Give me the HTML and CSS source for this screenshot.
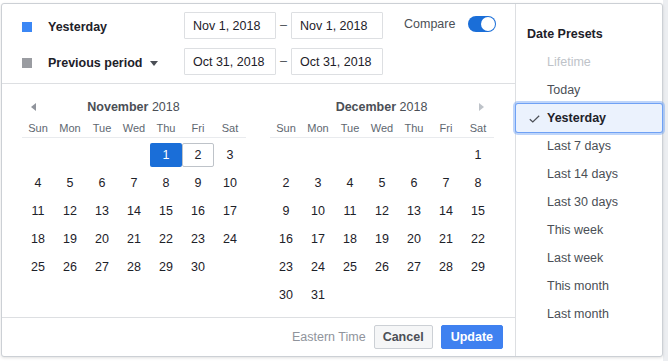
FILE: index.html
```html
<!DOCTYPE html>
<html lang="en">

<head>
    <meta charset="UTF-8">
    <meta name="viewport" content="width=device-width, initial-scale=1.0">
    <title>Date range picker</title>
    <link rel="stylesheet" href="styles.css">
</head>

<body>
    <div class="picker">
        <div class="main">
            <div class="ranges">
                <div class="range-row">
                    <div class="legend">
                        <span class="swatch swatch-current"></span>
                        <span class="legend-label">Yesterday</span>
                    </div>
                    <input class="date-input" type="text" value="Nov 1, 2018">
                    <span class="dash">&ndash;</span>
                    <input class="date-input" type="text" value="Nov 1, 2018">
                    <div class="compare">
                        <span>Compare</span>
                        <span class="toggle on"><span class="knob"></span></span>
                    </div>
                </div>
                <div class="range-row">
                    <div class="legend">
                        <span class="swatch swatch-previous"></span>
                        <span class="legend-label">Previous period</span>
                        <span class="caret"></span>
                    </div>
                    <input class="date-input" type="text" value="Oct 31, 2018">
                    <span class="dash">&ndash;</span>
                    <input class="date-input" type="text" value="Oct 31, 2018">
                </div>
            </div>

            <div class="calendars">
                <div class="calendar">
                    <div class="cal-head">
                        <span class="nav nav-prev"></span>
                        <span class="cal-title"><b>November</b> 2018</span>
                        <span></span>
                    </div>
                    <div class="weekdays">
                        <span>Sun</span><span>Mon</span><span>Tue</span><span>Wed</span><span>Thu</span><span>Fri</span><span>Sat</span>
                    </div>
                    <div class="days">
                        <span class="day selected" style="grid-column-start: 5">1</span>
                        <span class="day hover">2</span>
                        <span class="day">3</span>
                        <span class="day">4</span><span class="day">5</span><span class="day">6</span><span class="day">7</span><span class="day">8</span><span class="day">9</span><span class="day">10</span>
                        <span class="day">11</span><span class="day">12</span><span class="day">13</span><span class="day">14</span><span class="day">15</span><span class="day">16</span><span class="day">17</span>
                        <span class="day">18</span><span class="day">19</span><span class="day">20</span><span class="day">21</span><span class="day">22</span><span class="day">23</span><span class="day">24</span>
                        <span class="day">25</span><span class="day">26</span><span class="day">27</span><span class="day">28</span><span class="day">29</span><span class="day">30</span>
                    </div>
                </div>

                <div class="calendar">
                    <div class="cal-head">
                        <span></span>
                        <span class="cal-title"><b>December</b> 2018</span>
                        <span class="nav nav-next"></span>
                    </div>
                    <div class="weekdays">
                        <span>Sun</span><span>Mon</span><span>Tue</span><span>Wed</span><span>Thu</span><span>Fri</span><span>Sat</span>
                    </div>
                    <div class="days">
                        <span class="day" style="grid-column-start: 7">1</span>
                        <span class="day">2</span><span class="day">3</span><span class="day">4</span><span class="day">5</span><span class="day">6</span><span class="day">7</span><span class="day">8</span>
                        <span class="day">9</span><span class="day">10</span><span class="day">11</span><span class="day">12</span><span class="day">13</span><span class="day">14</span><span class="day">15</span>
                        <span class="day">16</span><span class="day">17</span><span class="day">18</span><span class="day">19</span><span class="day">20</span><span class="day">21</span><span class="day">22</span>
                        <span class="day">23</span><span class="day">24</span><span class="day">25</span><span class="day">26</span><span class="day">27</span><span class="day">28</span><span class="day">29</span>
                        <span class="day">30</span><span class="day">31</span>
                    </div>
                </div>
            </div>

            <div class="footer">
                <span class="timezone">Eastern Time</span>
                <button class="btn btn-cancel">Cancel</button>
                <button class="btn btn-update">Update</button>
            </div>
        </div>

        <div class="presets">
            <div class="presets-title">Date Presets</div>
            <div class="preset disabled">Lifetime</div>
            <div class="preset">Today</div>
            <div class="preset active">
                <svg class="check" width="11" height="8" viewBox="0 0 11 8">
                    <path d="M0.8 4.2 L3.8 7 L10.2 0.8" fill="none" stroke="#4b4f56" stroke-width="1.2" />
                </svg>
                Yesterday
            </div>
            <div class="preset">Last 7 days</div>
            <div class="preset">Last 14 days</div>
            <div class="preset">Last 30 days</div>
            <div class="preset">This week</div>
            <div class="preset">Last week</div>
            <div class="preset">This month</div>
            <div class="preset">Last month</div>
        </div>
    </div>
</body>

</html>
```

FILE: styles.css
```css
body {
    margin: 0;
    font-family: "Liberation Sans", Arial, sans-serif;
    font-size: 12.5px;
    color: #1d2129;
    background: linear-gradient(to right, #fff 663px, #eceef1 663px);
    height: 361px;
    overflow: hidden;
}

.picker {
    display: flex;
    width: 660px;
    height: 352px;
    margin: 3px 0 0 1px;
    background: #fff;
    border: 1px solid #ccd0d5;
    border-radius: 3px;
    box-shadow: 0 1px 3px rgba(0, 0, 0, 0.12);
}

.main {
    width: 513px;
    display: flex;
    flex-direction: column;
    border-right: 1px solid #dddfe2;
}

/* top: date ranges */
.ranges {
    display: flex;
    flex-direction: column;
    gap: 9px;
    padding: 8px 0 8px 20px;
    border-bottom: 1px solid #dddfe2;
}

.range-row {
    display: flex;
    align-items: center;
    height: 27px;
}

.legend {
    width: 162px;
    display: flex;
    align-items: center;
    padding-top: 3px;
}

.swatch {
    width: 10px;
    height: 10px;
    margin-right: 16px;
}

.swatch-current {
    background: #3b87f5;
}

.swatch-previous {
    background: #9a9ca1;
}

.legend-label {
    font-weight: bold;
    color: #1d2129;
}

.caret {
    margin-left: 8px;
    margin-top: 1px;
    border-left: 4px solid transparent;
    border-right: 4px solid transparent;
    border-top: 5px solid #4b4f56;
}

.date-input {
    box-sizing: border-box;
    width: 92px;
    height: 27px;
    padding: 0 0 0 8px;
    border: 1px solid #dddfe2;
    border-radius: 1px;
    font-family: inherit;
    font-size: 12.5px;
    color: #1d2129;
}

.dash {
    width: 15px;
    text-align: center;
    color: #4b4f56;
    margin-top: -2px;
}

.compare {
    display: flex;
    align-items: center;
    gap: 13px;
    margin-left: 21px;
    margin-top: -3px;
    color: #4b4f56;
}

.toggle {
    position: relative;
    width: 28px;
    height: 16px;
    border-radius: 8px;
    background: #1a6ed8;
}

.toggle .knob {
    position: absolute;
    top: 1px;
    right: 1px;
    width: 14px;
    height: 14px;
    border-radius: 50%;
    background: #fff;
}

/* calendars */
.calendars {
    flex: 1;
    display: flex;
    gap: 24px;
    padding: 14px 21px 0 20px;
}

.calendar {
    width: 224px;
}

.cal-head {
    display: grid;
    grid-template-columns: 1fr auto 1fr;
    align-items: center;
    height: 18px;
    padding: 0 10px 0 9px;
}

.cal-title {
    color: #4b4f56;
}

.cal-title b {
    color: #4b4f56;
}

.nav {
    width: 0;
    height: 0;
    border-top: 4px solid transparent;
    border-bottom: 4px solid transparent;
}

.nav-prev {
    border-right: 5px solid #90949c;
}

.nav-next {
    justify-self: end;
    border-left: 5px solid #bec3c9;
}

.weekdays {
    display: grid;
    grid-template-columns: repeat(7, 32px);
    margin-top: 4px;
    line-height: 17px;
    border-bottom: 1px solid #e9ebee;
    font-size: 11px;
    color: #606770;
    text-align: center;
}

.days {
    display: grid;
    grid-template-columns: repeat(7, 32px);
    grid-auto-rows: 28px;
    margin-top: 3px;
    align-items: center;
}

.day {
    box-sizing: border-box;
    height: 24px;
    line-height: 24px;
    text-align: center;
    border-radius: 2px;
}

.day.selected {
    background: #1a6ed8;
    color: #fff;
}

.day.hover {
    border: 1px solid #bec3c9;
    line-height: 22px;
}

/* footer */
.footer {
    display: flex;
    align-items: center;
    justify-content: flex-end;
    gap: 8px;
    height: 38px;
    padding-right: 12px;
    border-top: 1px solid #dddfe2;
}

.timezone {
    color: #90949c;
}

.btn {
    height: 24px;
    padding: 0 8px;
    font-family: inherit;
    font-size: 12.5px;
    font-weight: bold;
    border-radius: 2px;
    cursor: pointer;
}

.btn-cancel {
    background: #f5f6f7;
    border: 1px solid #ccd0d5;
    color: #4b4f56;
}

.btn-update {
    background: #3f81f0;
    border: 1px solid #3f81f0;
    color: #fff;
    padding: 0 9px;
}

/* presets */
.presets {
    flex: 1;
    padding-top: 16px;
}

.presets-title {
    line-height: 28px;
    padding-left: 11px;
    font-weight: bold;
    color: #1d2129;
}

.preset {
    position: relative;
    height: 28px;
    line-height: 28px;
    padding-left: 31px;
    color: #4b4f56;
}

.preset.disabled {
    color: #bec3c9;
}

.preset.active {
    font-weight: bold;
    color: #1d2129;
    background: #ebf2fd;
    box-shadow: 0 0 0 1px #6fa1f5, 0 0 0 3px rgba(111, 161, 245, 0.45);
    border-radius: 2px;
}

.check {
    position: absolute;
    left: 13px;
    top: 11px;
}
```
